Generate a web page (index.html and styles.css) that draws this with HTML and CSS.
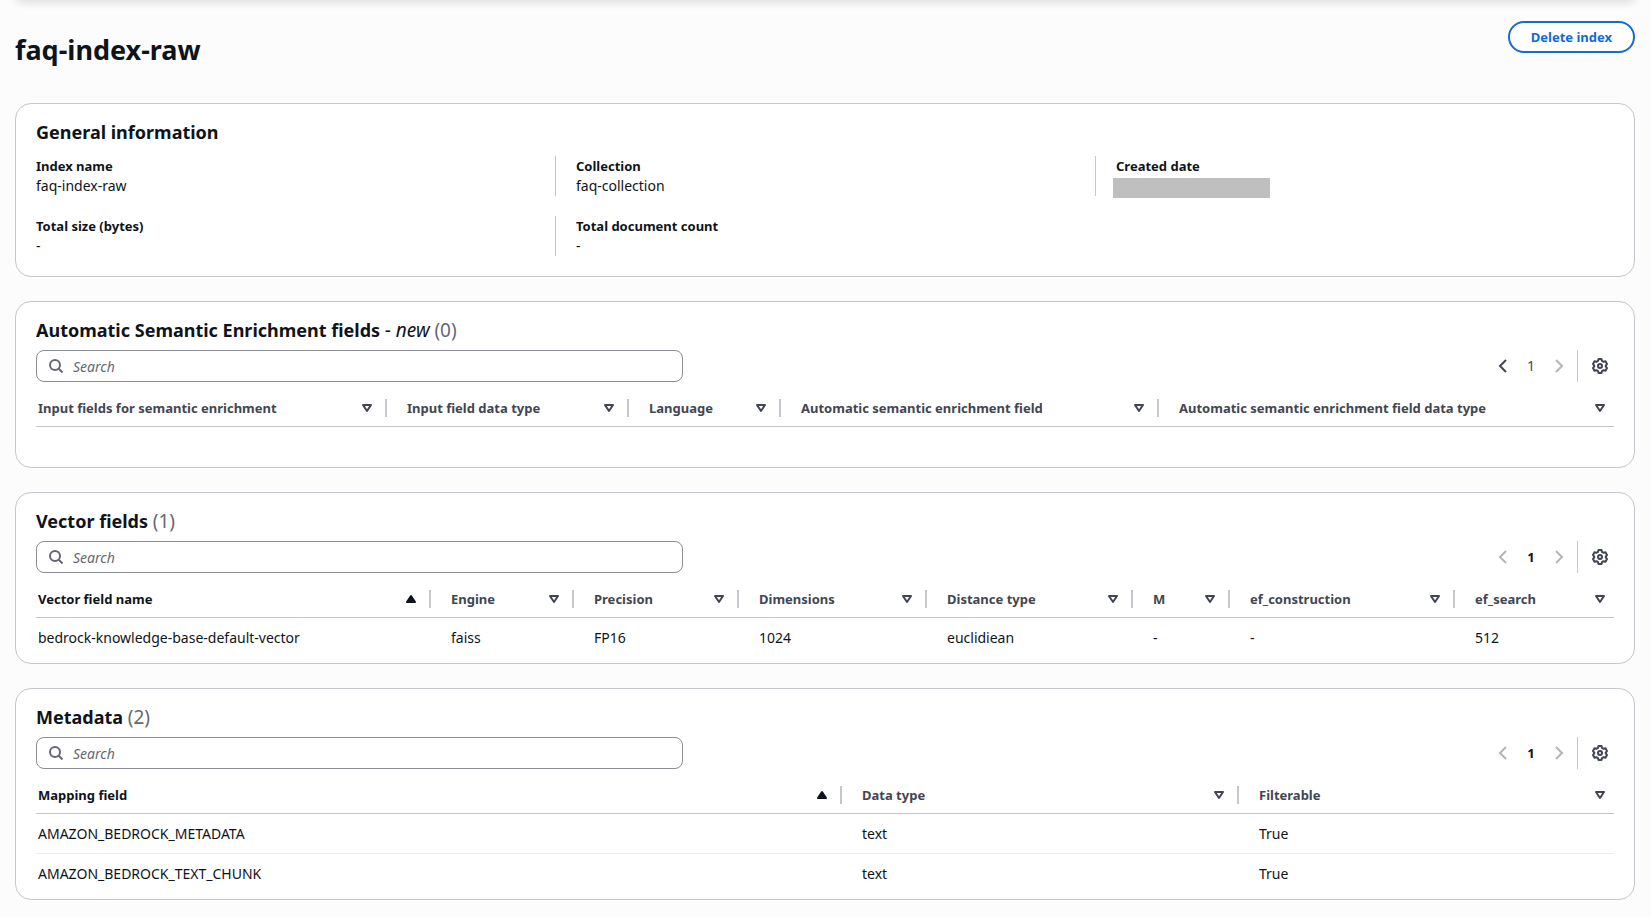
FILE: index.html
```html
<!DOCTYPE html>
<html lang="en">
<head>
  <meta charset="UTF-8" />
  <meta name="viewport" content="width=device-width, initial-scale=1.0"/>
  <title>faq-index-raw</title>
  <link rel="stylesheet" href="styles.css">
</head>
<body>
  <!-- Shared icons -->
  <svg class="sprite" aria-hidden="true">
    <symbol id="icon-search" viewBox="0 0 16 16">
      <circle cx="7" cy="7" r="5"/><path d="M10.500 10.500l4 4"/>
    </symbol>
    <symbol id="icon-prev" viewBox="0 0 16 16"><path d="M11 2L5 8l6 6"/></symbol>
    <symbol id="icon-next" viewBox="0 0 16 16"><path d="M5 2l6 6-6 6"/></symbol>
    <symbol id="icon-down" viewBox="0 0 16 16"><path d="M4 5h8l-4 6z"/></symbol>
    <symbol id="icon-up" viewBox="0 0 16 16"><path d="M4 11h8L8 5z" fill="currentColor"/></symbol>
    <symbol id="icon-gear" viewBox="0 0 16 16">
      <path d="M6.500 1h3l.5 1.900 1.600.9 1.900-.5L15 5.900 13.600 8l1.400 2.100-1.500 2.600-1.900-.5-1.600.9-.5 1.900h-3L6 13.100l-1.600-.9-1.900.5L1 10.100 2.400 8 1 5.900l1.500-2.600 1.900.5L6 2.900z"/>
      <circle cx="8" cy="8" r="2"/>
    </symbol>
  </svg>

  <div class="top-bar"></div>

  <main class="page">
    <header class="page-header">
      <h1>faq-index-raw</h1>
      <button type="button" class="delete-btn">Delete index</button>
    </header>

    <section class="card info-card">
      <h2>General information</h2>
      <dl class="info-grid">
        <div><dt>Index name</dt><dd>faq-index-raw</dd></div>
        <div><dt>Collection</dt><dd>faq-collection</dd></div>
        <div><dt>Created date</dt><dd class="hidden-date"></dd></div>
        <div><dt>Total size (bytes)</dt><dd>-</dd></div>
        <div><dt>Total document count</dt><dd>-</dd></div>
      </dl>
    </section>

    <section class="card">
      <h2>Automatic Semantic Enrichment fields <span class="tag">- <em>new</em></span> <span class="count">(0)</span></h2>
      <div class="toolbar">
        <div class="search">
          <label for="searchSemantic" aria-label="Search semantic fields"><svg class="icon"><use href="#icon-search"/></svg></label>
          <input type="text" id="searchSemantic" placeholder="Search">
        </div>
        <div class="pagination">
          <button type="button" aria-label="Previous page"><svg class="icon"><use href="#icon-prev"/></svg></button>
          <button type="button">1</button>
          <button type="button" aria-label="Next page" disabled><svg class="icon"><use href="#icon-next"/></svg></button>
        </div>
        <button type="button" class="settings" aria-label="Preferences"><svg class="icon"><use href="#icon-gear"/></svg></button>
      </div>
      <table class="semantic-table">
        <thead>
          <tr>
            <th><button type="button">Input fields for semantic enrichment<svg class="icon"><use href="#icon-down"/></svg></button></th>
            <th><button type="button">Input field data type<svg class="icon"><use href="#icon-down"/></svg></button></th>
            <th><button type="button">Language<svg class="icon"><use href="#icon-down"/></svg></button></th>
            <th><button type="button">Automatic semantic enrichment field<svg class="icon"><use href="#icon-down"/></svg></button></th>
            <th><button type="button">Automatic semantic enrichment field data type<svg class="icon"><use href="#icon-down"/></svg></button></th>
          </tr>
        </thead>
        <tbody>
          <tr><td colspan="5"></td></tr>
        </tbody>
      </table>
    </section>

    <section class="card">
      <h2>Vector fields <span class="count">(1)</span></h2>
      <div class="toolbar">
        <div class="search">
          <label for="searchVector" aria-label="Search vector fields"><svg class="icon"><use href="#icon-search"/></svg></label>
          <input type="text" id="searchVector" placeholder="Search">
        </div>
        <div class="pagination">
          <button type="button" aria-label="Previous page" disabled><svg class="icon"><use href="#icon-prev"/></svg></button>
          <button type="button" class="current">1</button>
          <button type="button" aria-label="Next page" disabled><svg class="icon"><use href="#icon-next"/></svg></button>
        </div>
        <button type="button" class="settings" aria-label="Preferences"><svg class="icon"><use href="#icon-gear"/></svg></button>
      </div>
      <table class="vector-table">
        <thead>
          <tr>
            <th class="sorted"><button type="button">Vector field name<svg class="icon"><use href="#icon-up"/></svg></button></th>
            <th><button type="button">Engine<svg class="icon"><use href="#icon-down"/></svg></button></th>
            <th><button type="button">Precision<svg class="icon"><use href="#icon-down"/></svg></button></th>
            <th><button type="button">Dimensions<svg class="icon"><use href="#icon-down"/></svg></button></th>
            <th><button type="button">Distance type<svg class="icon"><use href="#icon-down"/></svg></button></th>
            <th><button type="button">M<svg class="icon"><use href="#icon-down"/></svg></button></th>
            <th><button type="button">ef_construction<svg class="icon"><use href="#icon-down"/></svg></button></th>
            <th><button type="button">ef_search<svg class="icon"><use href="#icon-down"/></svg></button></th>
          </tr>
        </thead>
        <tbody>
          <tr>
            <td>bedrock-knowledge-base-default-vector</td>
            <td>faiss</td>
            <td>FP16</td>
            <td>1024</td>
            <td>euclidiean</td>
            <td>-</td>
            <td>-</td>
            <td>512</td>
          </tr>
        </tbody>
      </table>
    </section>

    <section class="card">
      <h2>Metadata <span class="count">(2)</span></h2>
      <div class="toolbar">
        <div class="search">
          <label for="searchMetadata" aria-label="Search metadata"><svg class="icon"><use href="#icon-search"/></svg></label>
          <input type="text" id="searchMetadata" placeholder="Search">
        </div>
        <div class="pagination">
          <button type="button" aria-label="Previous page" disabled><svg class="icon"><use href="#icon-prev"/></svg></button>
          <button type="button" class="current">1</button>
          <button type="button" aria-label="Next page" disabled><svg class="icon"><use href="#icon-next"/></svg></button>
        </div>
        <button type="button" class="settings" aria-label="Preferences"><svg class="icon"><use href="#icon-gear"/></svg></button>
      </div>
      <table class="metadata-table">
        <thead>
          <tr>
            <th class="sorted"><button type="button">Mapping field<svg class="icon"><use href="#icon-up"/></svg></button></th>
            <th><button type="button">Data type<svg class="icon"><use href="#icon-down"/></svg></button></th>
            <th><button type="button">Filterable<svg class="icon"><use href="#icon-down"/></svg></button></th>
          </tr>
        </thead>
        <tbody>
          <tr><td>AMAZON_BEDROCK_METADATA</td><td>text</td><td>True</td></tr>
          <tr><td>AMAZON_BEDROCK_TEXT_CHUNK</td><td>text</td><td>True</td></tr>
        </tbody>
      </table>
    </section>
  </main>
</body>
</html>
```

FILE: styles.css
```css
* {
  box-sizing: border-box;
}
body {
  margin: 0;
  background-color: #fcfcfd;
  color: #0f141a;
  font-family: "Noto Sans", sans-serif;
  font-size: 14px;
  line-height: 20px;
}
button {
  padding: 0;
  border: none;
  background: none;
  color: inherit;
  font: inherit;
  cursor: pointer;
}
.sprite {
  display: none;
}
.icon {
  display: block;
  flex: none;
  width: 16px;
  height: 16px;
  fill: none;
  stroke: currentColor;
  stroke-width: 2;
}
th .icon,
.settings .icon {
  stroke-linejoin: round;
}

/* bottom edge of the bar above the page */
.top-bar {
  height: 16px;
  margin: -16px 16px 0;
  border-radius: 16px;
  box-shadow: 0 1px 8px 2px rgba(0, 7, 22, 0.12);
}
.page {
  display: flex;
  flex-direction: column;
  gap: 24px;
  padding: 21px 16px 18px 15px;
}
.page-header {
  display: flex;
  justify-content: space-between;
  align-items: flex-start;
  height: 58px;
}
h1 {
  margin: 12px 0 0;
  font-size: 27px;
  line-height: 34px;
}
.delete-btn {
  padding: 4px 21px;
  border: 2px solid #1369d8;
  border-radius: 20px;
  background: #fff;
  color: #1369d8;
  font-size: 13px;
  font-weight: 700;
}

.card {
  padding: 16px 20px 6px;
  border: 1px solid #c6c6cd;
  border-radius: 16px;
  background: #fff;
}
.info-card {
  padding-bottom: 20px;
}
h2 {
  margin: 0 0 8px;
  font-size: 18px;
  line-height: 24px;
}
.tag,
.count {
  font-size: 19px;
  font-weight: 400;
}
.count {
  color: #656871;
}
.info-grid {
  display: grid;
  grid-template-columns: repeat(3, 1fr);
  row-gap: 20px;
  margin: 12px -21px 0;
}
.info-grid div {
  padding-left: 20px;
  border-left: 1px solid #c6c6cd;
}
.info-grid div:nth-child(3n + 1) {
  border-color: transparent;
}
dt {
  font-size: 13px;
  font-weight: 700;
}
dd {
  margin: 0;
}
.hidden-date {
  width: 157px;
  height: 20px;
  margin: 2px 0 -2px -3px;
  background: #bfbfbf;
}

.toolbar {
  display: flex;
  align-items: center;
  height: 32px;
}
.search {
  display: flex;
  align-items: center;
  width: 41%;
  height: 32px;
  margin-right: auto;
  border: 1px solid #8c8c94;
  border-radius: 8px;
}
.search label {
  padding: 0 9px 0 11px;
  color: #656871;
}
.search input {
  flex: 1;
  min-width: 0;
  height: 28px;
  padding: 0;
  border: none;
  outline: none;
  background: none;
  color: inherit;
  font: inherit;
}
.search input::placeholder {
  color: #656871;
  font-style: italic;
}
.pagination {
  display: flex;
  align-items: center;
  gap: 12px;
  height: 32px;
  padding-right: 10px;
  border-right: 1px solid #c6c6cd;
  color: #424650;
}
.pagination button {
  width: 16px;
  text-align: center;
}
.pagination button:disabled {
  color: #b4b4bb;
  cursor: default;
}
.pagination .current {
  color: #0f141a;
  font-size: 13px;
  font-weight: 700;
}
.settings {
  margin: 0 6px 0 14px;
  color: #424650;
}

table {
  width: 100%;
  table-layout: fixed;
  border-collapse: separate;
  border-spacing: 0;
}
th {
  height: 45px;
  padding: 8px 0 0 20px;
  border-bottom: 1px solid #c6c6cd;
  color: #424650;
  font-size: 13px;
  text-align: left;
  white-space: nowrap;
}
th button {
  display: flex;
  justify-content: space-between;
  align-items: center;
  width: 100%;
  height: 18px;
  padding-right: 10px;
  border-right: 2px solid #c6c6cd;
}
th:last-child button {
  padding-right: 6px;
  border-right: none;
}
.sorted {
  color: #0f141a;
}
td {
  height: 40px;
  padding: 0 0 0 20px;
  border-bottom: 1px solid #ebebf0;
}
tr:last-child td {
  height: 39px;
  border-bottom: none;
}
th:first-child,
td:first-child {
  padding-left: 2px;
}
tbody tr td[colspan] {
  height: 34px;
}

/* column widths */
.semantic-table th:nth-child(1) { width: 351px; }
.semantic-table th:nth-child(2) { width: 242px; }
.semantic-table th:nth-child(3) { width: 152px; }
.semantic-table th:nth-child(4) { width: 378px; }

.vector-table th:nth-child(1) { width: 395px; }
.vector-table th:nth-child(2) { width: 143px; }
.vector-table th:nth-child(3) { width: 165px; }
.vector-table th:nth-child(4) { width: 188px; }
.vector-table th:nth-child(5) { width: 206px; }
.vector-table th:nth-child(6) { width: 97px; }
.vector-table th:nth-child(7) { width: 225px; }

.metadata-table th:nth-child(1) { width: 806px; }
.metadata-table th:nth-child(2) { width: 397px; }
```
